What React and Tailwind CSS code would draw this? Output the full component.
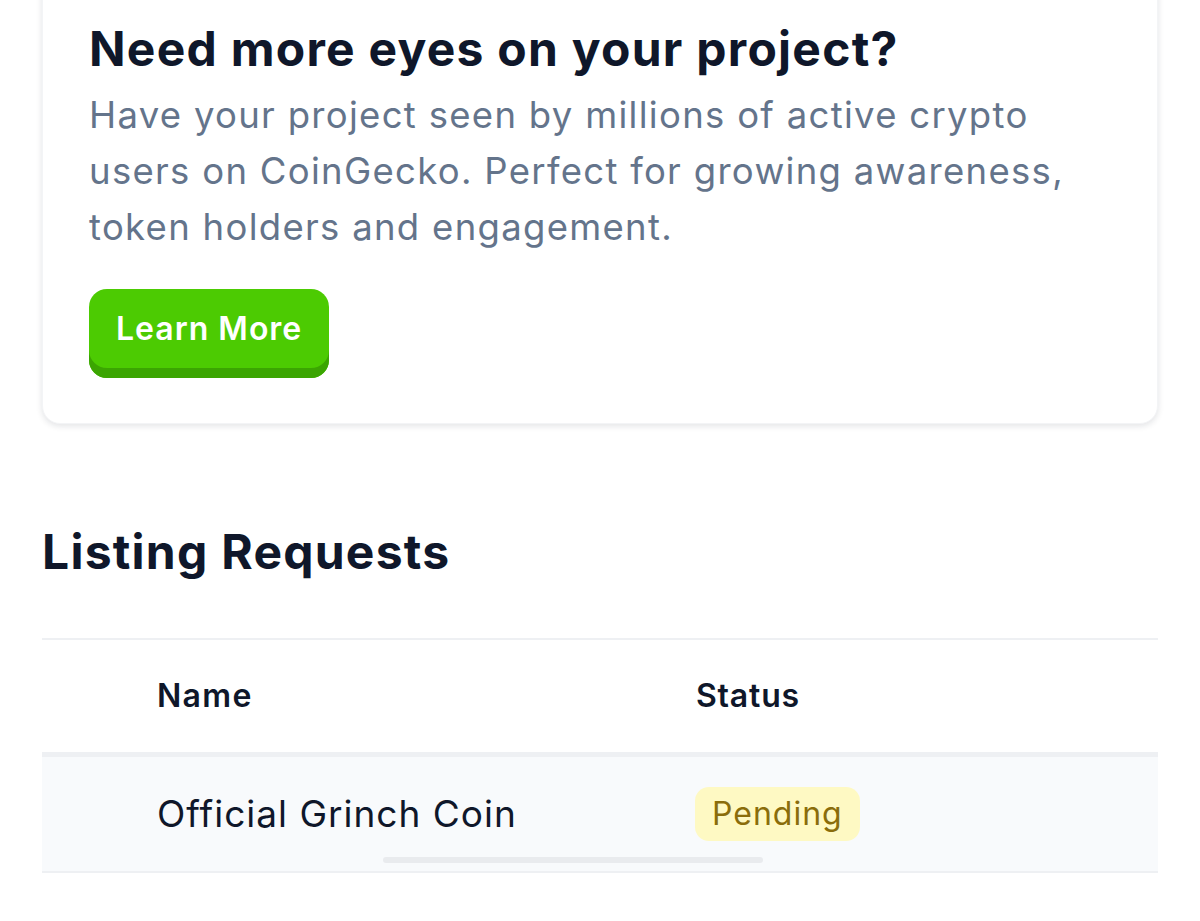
export default function App() {
  return (
    <div className="min-h-screen bg-white font-['Inter',sans-serif] overflow-hidden">
      <div className="px-[42px]">
        {/* Promo card */}
        <div className="-mt-[40px] rounded-[18px] bg-white border border-gray-100 shadow-[0_2px_6px_rgba(15,23,42,0.12)] pt-[60px] pb-[45px] px-[46px]">
          <h2 className="text-[48px] leading-[56px] font-bold text-[#0f172a] tracking-[1.25px]">
            Need more eyes on your project?
          </h2>
          <p className="mt-[10px] text-[36.5px] leading-[56px] text-[#64748b] tracking-[1.3px] max-w-[1000px]">
            Have your project seen by millions of active crypto users on CoinGecko. Perfect for growing awareness, token holders and engagement.
          </p>
          <button className="mt-[34px] h-[89px] px-[27px] pb-[10px] rounded-[18px] bg-[#4ccb02] shadow-[inset_0_-10px_0_#3ba502] text-white text-[32px] font-semibold tracking-[1px]">
            Learn More
          </button>
        </div>

        {/* Listing requests */}
        <h2 className="mt-[100px] text-[48px] leading-[56px] font-bold text-[#0f172a] tracking-[1.25px]">Listing Requests</h2>

        <div className="mt-[58px] border-t-2 border-[#eef0f3]">
          <div className="grid grid-cols-[654px_1fr] h-[117px] items-center border-b-[5px] border-[#eef0f3]">
            <div className="pl-[115px] text-[32px] font-semibold text-[#0f172a] tracking-[1.3px]">Name</div>
            <div className="text-[32px] font-semibold text-[#0f172a] tracking-[0.8px]">Status</div>
          </div>
          <div className="relative grid grid-cols-[653px_1fr] h-[116px] items-center bg-[#f8fafc] border-b-2 border-[#eef0f3]">
            <div className="pl-[115px] text-[37px] text-[#0f172a] tracking-[1px]">Official Grinch Coin</div>
            <div>
              <span className="inline-block rounded-[14px] bg-[#fef9c3] px-[17px] py-[4px] text-[32px] leading-[46px] text-[#8a6d0b] tracking-[1px]">
                Pending
              </span>
            </div>
            <div className="absolute left-[341px] bottom-[8px] h-[6px] w-[380px] rounded-full bg-[#e9ebee]" />
          </div>
        </div>
      </div>
    </div>
  )
}
